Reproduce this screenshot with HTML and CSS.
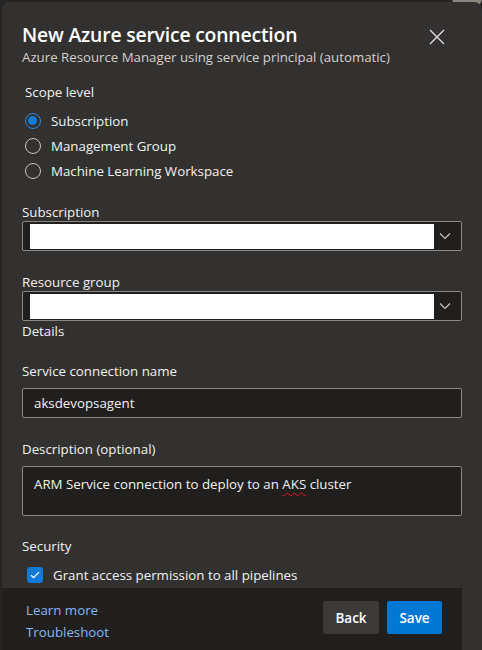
FILE: index.html
```html
<!DOCTYPE html>
<html lang="en">
<head>
<meta charset="utf-8">
<title>New Azure service connection</title>
<link rel="stylesheet" href="styles.css">
</head>
<body>
<div class="backdrop-avatar"></div>
<div class="panel">
  <div class="content">
    <div class="header">
      <div class="titles">
        <h1 class="title">New Azure service connection</h1>
        <div class="subtitle">Azure Resource Manager using service principal (automatic)</div>
      </div>
      <button class="close" aria-label="Close">
        <svg width="16" height="16" viewBox="0 0 16 16"><path d="M1 1 L15 15 M15 1 L1 15" stroke="#e1dfdd" stroke-width="1.4" fill="none"/></svg>
      </button>
    </div>

    <div class="scope-label">Scope level</div>
    <div class="radios">
      <div class="radio-row"><span class="radio checked"></span><span>Subscription</span></div>
      <div class="radio-row"><span class="radio"></span><span>Management Group</span></div>
      <div class="radio-row"><span class="radio"></span><span>Machine Learning Workspace</span></div>
    </div>

    <div class="field-label first">Subscription</div>
    <div class="dropdown">
      <div class="redacted"></div>
      <svg class="chev" width="12" height="8" viewBox="0 0 12 8"><path d="M1 1.5 L6 6.5 L11 1.5" stroke="#c8c6c4" stroke-width="1.2" fill="none"/></svg>
    </div>

    <div class="field-label">Resource group</div>
    <div class="dropdown">
      <div class="redacted"></div>
      <svg class="chev" width="12" height="8" viewBox="0 0 12 8"><path d="M1 1.5 L6 6.5 L11 1.5" stroke="#c8c6c4" stroke-width="1.2" fill="none"/></svg>
    </div>
    <div class="section-label">Details</div>

    <div class="field-label">Service connection name</div>
    <div class="textbox">aksdevopsagent</div>

    <div class="field-label">Description (optional)</div>
    <div class="textarea">ARM Service connection to deploy to an <span class="misspelled">AKS</span> cluster</div>

    <div class="field-label security">Security</div>
    <div class="check-row">
      <span class="checkbox">
        <svg width="10" height="8" viewBox="0 0 10 8"><path d="M1 4.2 L3.6 6.6 L9 1.2" stroke="#ffffff" stroke-width="1.2" fill="none"/></svg>
      </span>
      <span>Grant access permission to all pipelines</span>
    </div>
  </div>

  <div class="footer">
    <div class="links">
      <a class="link" href="#">Learn more</a>
      <a class="link" href="#">Troubleshoot</a>
    </div>
    <div class="buttons">
      <button class="btn back">Back</button>
      <button class="btn save">Save</button>
    </div>
  </div>
</div>
</body>
</html>
```

FILE: styles.css
```css
* { box-sizing: border-box; }

html, body {
  margin: 0;
  padding: 0;
}

body {
  background: #262524;
  width: 482px;
  height: 650px;
  overflow: hidden;
  font-family: "Open Sans", "Noto Sans", sans-serif;
  color: #f3f2f1;
  position: relative;
}

.backdrop-avatar {
  position: absolute;
  right: 0;
  top: -14px;
  width: 30px;
  height: 24px;
  border-radius: 50%;
  background: #8c8680;
}

.panel {
  position: relative;
  margin: 2px 0 0 2px;
  height: 648px;
  background: #323130;
  border-radius: 8px 8px 0 0;
  display: flex;
  flex-direction: column;
}

.content {
  flex: 1;
  padding: 20px 20px 0 20px;
  width: 480px;
}

.header {
  display: flex;
  justify-content: space-between;
  align-items: flex-start;
  width: 440px;
}

.title {
  margin: 0;
  font-size: 19.4px;
  font-weight: 600;
  line-height: 26px;
  color: #ffffff;
  letter-spacing: -0.2px;
}

.subtitle {
  font-size: 13.25px;
  line-height: 18px;
  color: #d2d0ce;
}

.close {
  background: none;
  border: 0;
  padding: 0;
  margin: 7px 17px 0 0;
  width: 16px;
  height: 16px;
  display: block;
}

.close svg { display: block; }

.scope-label {
  margin-top: 16px;
  padding-left: 3px;
  font-size: 13.3px;
  line-height: 20px;
}

.radios {
  margin-top: 6px;
  padding-left: 3px;
}

.radio-row {
  display: flex;
  align-items: center;
  height: 25px;
  font-size: 13.3px;
}

.radio {
  width: 16px;
  height: 16px;
  border-radius: 50%;
  border: 1px solid #c8c6c4;
  margin-right: 10px;
  flex: none;
  position: relative;
}

.radio.checked {
  border: 1.5px solid #2b88d8;
}

.radio.checked::after {
  content: "";
  position: absolute;
  left: 2px;
  top: 2px;
  width: 9px;
  height: 9px;
  border-radius: 50%;
  background: #0f7ad8;
}

.field-label {
  margin-top: 22px;
  font-size: 13.3px;
  line-height: 18px;
}

.field-label.first { margin-top: 20px; }

.dropdown {
  width: 440px;
  height: 30px;
  background: #201f1e;
  border: 1px solid #8a8886;
  border-radius: 2px;
  display: flex;
  align-items: center;
  padding: 0 8px 0 7px;
}

.redacted {
  width: 404px;
  height: 25px;
  background: #ffffff;
}

.chev {
  margin-left: auto;
  margin-right: 2px;
}

.section-label {
  font-size: 13.3px;
  line-height: 18px;
  margin-top: 1px;
}

.field-label + .textbox,
.field-label + .textarea { margin-top: 8px; }

.textbox {
  width: 440px;
  height: 30px;
  background: #201f1e;
  border: 1px solid #8a8886;
  border-radius: 2px;
  padding: 0 11px;
  font-size: 13.3px;
  line-height: 29px;
}

.textarea {
  width: 440px;
  height: 50px;
  background: #201f1e;
  border: 1px solid #8a8886;
  border-radius: 2px;
  padding: 7px 11px;
  font-size: 13.3px;
  line-height: 20px;
}

.misspelled {
  text-decoration: underline wavy #e81123;
  text-decoration-thickness: 1px;
  text-underline-offset: 3px;
}

.field-label.security { margin-top: 21px; }

.check-row {
  display: flex;
  align-items: center;
  height: 20px;
  margin-top: 10px;
  padding-left: 5px;
  font-size: 13.3px;
}

.checkbox {
  width: 16px;
  height: 16px;
  border-radius: 3px;
  background: #0f7ad8;
  display: flex;
  align-items: center;
  justify-content: center;
  margin-right: 10px;
  flex: none;
}

.footer {
  width: 460px;
  height: 62px;
  flex: none;
  background: #201f1e;
  display: flex;
  justify-content: space-between;
  align-items: flex-start;
  padding: 0 20px 0 24px;
}

.links {
  display: flex;
  flex-direction: column;
  padding-top: 11px;
}

.link {
  color: #88b7ee;
  text-decoration: none;
  font-size: 13.3px;
  line-height: 22px;
}

.buttons {
  display: flex;
  gap: 8px;
  padding-top: 13px;
}

.btn {
  height: 33px;
  border: 0;
  border-radius: 2px;
  font-family: inherit;
  font-size: 13.5px;
  font-weight: 600;
  color: #ffffff;
  padding: 0;
}

.btn.back {
  width: 56px;
  background: #3b3a39;
}

.btn.save {
  width: 55px;
  background: #0078d4;
}
```
